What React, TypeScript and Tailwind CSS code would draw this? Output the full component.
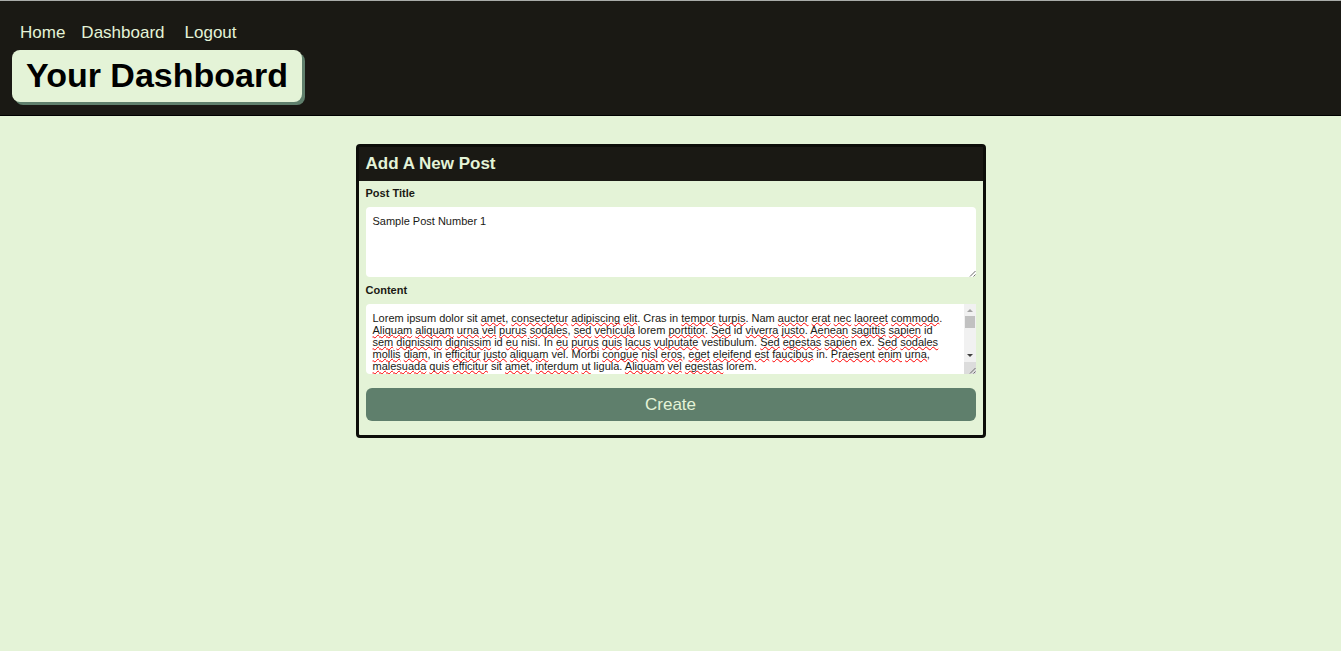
import React from "react";

const CONTENT_LINES = [
  "Lorem ipsum dolor sit [amet], [consectetur] [adipiscing] [elit]. Cras in [tempor] [turpis]. Nam [auctor] [erat] [nec] [laoreet] [commodo].",
  "[Aliquam] [aliquam] [urna] [vel] [purus] [sodales], [sed] [vehicula] lorem [porttitor]. [Sed] id [viverra] [justo]. [Aenean] [sagittis] [sapien] id",
  "[sem] [dignissim] [dignissim] id [eu] nisi. In [eu] [purus] [quis] [lacus] [vulputate] vestibulum. [Sed] [egestas] [sapien] ex. [Sed] [sodales]",
  "[mollis] [diam], in [efficitur] [justo] [aliquam] vel. Morbi [congue] [nisl] [eros], [eget] [eleifend] [est] [faucibus] in. [Praesent] [enim] [urna],",
  "[malesuada] [quis] [efficitur] sit [amet], [interdum] [ut] ligula. [Aliquam] [vel] [egestas] lorem.",
];

const content = CONTENT_LINES.map((line) => line.replace(/[[\]]/g, "")).join("\n");

const fieldText = "px-[7px] pt-2 text-[11px] leading-[12px]";

function SpellingMarks() {
  return (
    <div
      aria-hidden="true"
      className={`pointer-events-none absolute inset-0 overflow-hidden whitespace-pre text-transparent ${fieldText}`}
    >
      {CONTENT_LINES.map((line, i) => (
        <div key={i}>
          {line.split(/(\[\w+\])/).map((part, j) =>
            part.startsWith("[") ? (
              <span
                key={j}
                className="underline decoration-[#ff0000] decoration-wavy decoration-1 underline-offset-0 [text-decoration-skip-ink:none]"
              >
                {part.slice(1, -1)}
              </span>
            ) : (
              part
            ),
          )}
        </div>
      ))}
    </div>
  );
}

function Grip() {
  return (
    <svg
      aria-hidden="true"
      className="pointer-events-none absolute right-0 bottom-0 size-3"
      viewBox="0 0 12 12"
      stroke="#6b6b6b"
      strokeWidth="1"
      fill="none"
    >
      <path d="M6 11.5 L11.5 6 M9.5 11.5 L11.5 9.5" />
    </svg>
  );
}

function ScrollTrack() {
  return (
    <div aria-hidden="true" className="pointer-events-none absolute inset-y-0 right-0 flex w-3 flex-col bg-[#f1f1f1]">
      <svg className="h-3 w-3" viewBox="0 0 12 12" fill="#a3a3a3">
        <path d="M3 8 L6 5 L9 8 Z" />
      </svg>
      <div className="mx-px h-3 bg-[#c1c1c1]" />
      <div className="flex-1" />
      <svg className="h-3 w-3" viewBox="0 0 12 12" fill="#404040">
        <path d="M3 4 L6 7 L9 4 Z" />
      </svg>
      <div className="h-3 bg-[#dcdcdc]" />
    </div>
  );
}

export default function App() {
  return (
    <div className="min-h-screen bg-[#e4f3d7] font-['Liberation_Sans',Arial,sans-serif] text-[#1a1914]">
      <header className="border-t border-b border-t-[#a9aca9] border-b-black bg-[#1a1914] px-3 pt-5 pb-[13px]">
        <nav className="flex pl-2 text-[17px] leading-6 text-[#e4f3d7]">
          <a href="#home" className="mr-4">Home</a>
          <a href="#dashboard" className="mr-5">Dashboard</a>
          <a href="#logout">Logout</a>
        </nav>
        <h1 className="mt-[5px] w-fit rounded-lg bg-[#e4f3d7] px-[14px] pt-[5px] pb-[7px] text-[34px] leading-10 font-bold text-black shadow-[3px_3px_0_#5f7f6c]">
          Your Dashboard
        </h1>
      </header>
      <main className="px-4 pt-7">
        <form
          className="mx-auto max-w-[630px] rounded border-[3px] border-[#0c0d09] bg-[#e4f3d7]"
          onSubmit={(e) => e.preventDefault()}
        >
          <h2 className="bg-[#1a1914] px-[7px] py-[6px] text-[17px] leading-[22px] font-bold text-[#e4f3d7]">
            Add A New Post
          </h2>
          <div className="px-[7px] pt-1 pb-[14px]">
            <label htmlFor="post-title" className="block text-[11px] leading-4 font-bold">
              Post Title
            </label>
            <div className="relative mt-[6px] h-[70px]">
              <textarea
                id="post-title"
                spellCheck={false}
                defaultValue="Sample Post Number 1"
                className={`block size-full resize-none rounded bg-white text-[#1a1914] outline-none ${fieldText}`}
              />
              <Grip />
            </div>
            <label htmlFor="post-content" className="mt-[5px] block text-[11px] leading-4 font-bold">
              Content
            </label>
            <div className="relative mt-[6px] h-[70px]">
              <textarea
                id="post-content"
                spellCheck={false}
                wrap="off"
                defaultValue={content}
                className={`block size-full resize-none overflow-hidden rounded-l bg-white text-[#1a1914] outline-none ${fieldText}`}
              />
              <SpellingMarks />
              <ScrollTrack />
              <Grip />
            </div>
            <button
              type="submit"
              className="mt-[14px] block w-full rounded-md bg-[#5f7f6c] py-[5px] text-[17px] leading-[23px] text-[#e4f3d7]"
            >
              Create
            </button>
          </div>
        </form>
      </main>
    </div>
  );
}
